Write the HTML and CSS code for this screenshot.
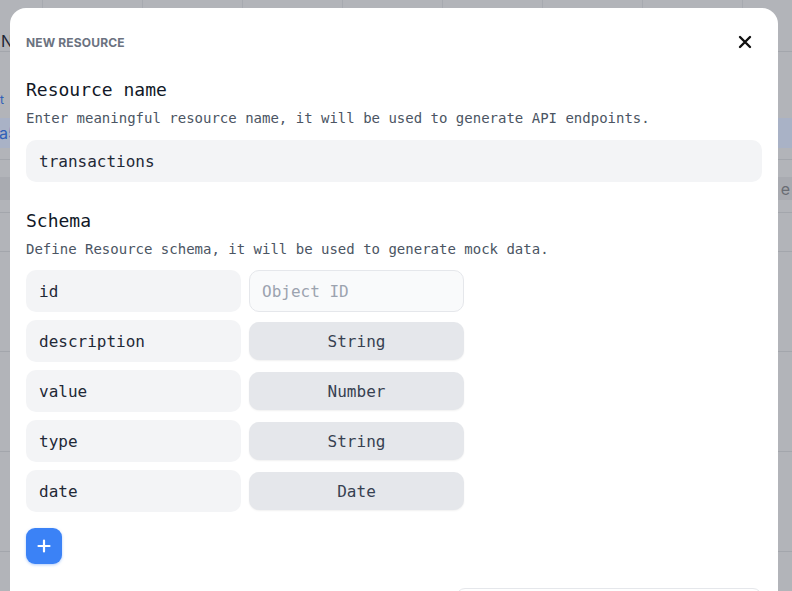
FILE: index.html
```html
<!DOCTYPE html>
<html>
<head>
<meta charset="utf-8">
<link rel="stylesheet" href="styles.css">
</head>
<body>
<div class="backdrop">
  <div class="bg-row bg-head"><div class="bg-cols"><span></span><span></span><span></span><span></span><span></span><span></span><span></span><span></span></div><span class="frag frag-n">N</span></div>
  <div class="bg-row bg-r1"><span class="frag frag-t">t</span><div class="bg-hl"><span class="frag frag-a">a5</span></div></div>
  <div class="bg-row bg-r2"><div class="bg-dark"><span class="frag frag-e">e</span></div></div>
  <div class="bg-row bg-r3"></div>
  <div class="bg-row bg-r4"></div>
  <div class="bg-row bg-r4"></div>
  <div class="bg-row bg-r4"></div>
  <div class="bg-row bg-r4"></div>
</div>

<div class="modal">
  <div class="modal-header">
    <span class="modal-title">NEW RESOURCE</span>
    <button class="close-btn" aria-label="Close">
      <svg width="14" height="14" viewBox="0 0 14 14"><path d="M2 2 L12 12 M12 2 L2 12" stroke="#111" stroke-width="2.4" stroke-linecap="round"/></svg>
    </button>
  </div>

  <div class="section">
    <h2 class="sec-title">Resource name</h2>
    <p class="sec-desc">Enter meaningful resource name, it will be used to generate API endpoints.</p>
    <div class="field field-wide">transactions</div>
  </div>

  <div class="section schema">
    <h2 class="sec-title">Schema</h2>
    <p class="sec-desc">Define Resource schema, it will be used to generate mock data.</p>
    <div class="rows">
      <div class="field">id</div><div class="field field-ph">Object ID</div>
      <div class="field">description</div><div class="type-cell"><div class="type-btn">String</div></div>
      <div class="field">value</div><div class="type-cell"><div class="type-btn">Number</div></div>
      <div class="field">type</div><div class="type-cell"><div class="type-btn">String</div></div>
      <div class="field">date</div><div class="type-cell"><div class="type-btn">Date</div></div>
    </div>
    <button class="add-btn" aria-label="Add">
      <svg width="14" height="14" viewBox="0 0 14 14"><path d="M7 1.5 V12.5 M1.5 7 H12.5" stroke="#fff" stroke-width="2.2" stroke-linecap="round"/></svg>
    </button>
  </div>

  <div class="footer"><div class="footer-box"></div></div>
</div>
</body>
</html>
```

FILE: styles.css
```css
* { box-sizing: border-box; }
html, body { margin: 0; padding: 0; }
body {
  width: 792px;
  height: 591px;
  overflow: hidden;
  position: relative;
  background: #b2b4b9;
  font-family: "DejaVu Sans Mono", "Liberation Mono", monospace;
}

/* background table under the overlay */
.backdrop { display: flex; flex-direction: column; }
.bg-row { position: relative; border-bottom: 1px solid #a3a6ac; }
.bg-head { height: 52px; }
.bg-cols { display: flex; margin-left: -57px; height: 8px; }
.bg-cols span { width: 100px; flex: none; border-right: 1px solid #a7aab0; }
.bg-r1 { height: 108px; display: flex; flex-direction: column; }
.bg-r2 { height: 53px; display: flex; align-items: flex-end; }
.bg-r3 { height: 39px; }
.bg-r4 { height: 100px; }
.bg-hl { margin-top: 8px; height: 30px; background: #a9b2c6; display: flex; align-items: center; }
.bg-dark { width: 100%; height: 23px; margin-bottom: 12px; background: #a9abb1; display: flex; justify-content: flex-end; align-items: center; }
.frag { font-family: "Inter", sans-serif; font-size: 16px; }
.frag-n { position: absolute; left: 1px; top: 31px; color: #1e2535; }
.frag-t { color: #2f5fb8; margin: 38px 0 0 0; line-height: 20px; font-size: 12px; }
.frag-a { color: #2f5fb8; margin-left: -1px; }
.frag-e { color: #6a6d74; margin-right: 2px; }

/* modal */
.modal {
  position: absolute;
  left: 10px;
  top: 8px;
  width: 768px;
  height: 640px;
  background: #fff;
  border-radius: 16px;
  padding: 0 16px;
}
.modal-header {
  height: 68px;
  display: flex;
  align-items: center;
  justify-content: space-between;
}
.modal-title {
  font-family: "Inter", "Liberation Sans", sans-serif;
  font-size: 12px;
  font-weight: 700;
  color: #6b7280;
  letter-spacing: 0.15px;
}
.close-btn {
  border: 0;
  background: none;
  padding: 0;
  width: 14px;
  height: 14px;
  margin-right: 10px;
  display: flex;
}
.section { display: flex; flex-direction: column; padding-top: 2px; }
.schema { padding-top: 27px; }
.sec-title {
  margin: 0;
  font-size: 18px;
  line-height: 24px;
  font-weight: 400;
  color: #111827;
}
.sec-desc {
  margin: 6px 0 12px;
  font-size: 14px;
  line-height: 20px;
  color: #4b5563;
  white-space: nowrap;
}
.schema .sec-desc { margin-bottom: 11px; }
.field {
  height: 42px;
  background: #f3f4f6;
  border-radius: 10px;
  display: flex;
  align-items: center;
  padding: 0 13px;
  font-size: 16px;
  color: #1f2937;
}
.field-wide { width: 736px; }
.field-ph {
  background: #f9fafb;
  border: 1px solid #e5e7eb;
  padding: 0 12px;
  color: #9ca3af;
}
.rows {
  display: grid;
  grid-template-columns: 215px 215px;
  grid-auto-rows: 42px;
  column-gap: 8px;
  row-gap: 8px;
}
.type-cell { display: flex; align-items: center; }
.type-btn {
  width: 100%;
  height: 38px;
  background: #e5e7eb;
  border-radius: 10px;
  box-shadow: 0 1px 2px rgba(0,0,0,0.06);
  display: flex;
  align-items: center;
  justify-content: center;
  font-size: 16px;
  color: #374151;
}
.add-btn {
  margin-top: 16px;
  width: 36px;
  height: 36px;
  border: 0;
  border-radius: 9px;
  background: #3b82f6;
  box-shadow: 0 1px 3px rgba(59,130,246,0.4);
  display: flex;
  align-items: center;
  justify-content: center;
  padding: 0;
}
.footer { display: flex; justify-content: flex-end; padding-top: 24px; }
.footer-box {
  width: 306px;
  height: 40px;
  border: 1px solid #e5e7eb;
  border-radius: 9px;
}
```
